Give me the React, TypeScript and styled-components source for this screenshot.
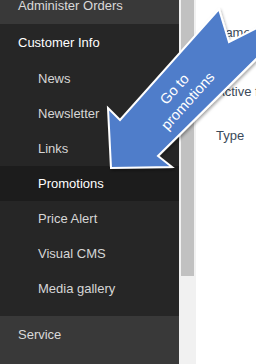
import React from 'react';
import styled, { createGlobalStyle } from 'styled-components';

const GlobalStyle = createGlobalStyle`
    html, body {
        margin: 0;
        padding: 0;
        background: #ffffff;
    }
    body {
        font-family: "Liberation Sans", Arial, sans-serif;
    }
`;

const Page = styled.div`
    position: relative;
    display: flex;
    width: 256px;
    height: 364px;
    overflow: hidden;
`;

const Sidebar = styled.nav`
    width: 179px;
    flex-shrink: 0;
    display: flex;
    flex-direction: column;
    background: #393939;
    font-size: 13px;
`;

const Category = styled.div<{ $open?: boolean }>`
    display: flex;
    flex-direction: column;
    background: ${props => (props.$open ? '#262626' : '#393939')};
    padding-bottom: ${props => (props.$open ? '10px' : '0')};
    &:first-child {
        margin-top: -13px;
    }
`;

const CategoryTitle = styled.div<{ $open?: boolean }>`
    height: 37px;
    display: flex;
    align-items: center;
    padding-left: 18px;
    color: ${props => (props.$open ? '#ffffff' : '#dadada')};
`;

const SubItem = styled.div<{ $active?: boolean }>`
    height: 35px;
    display: flex;
    align-items: center;
    padding-left: 38px;
    background: ${props => (props.$active ? '#1c1c1c' : 'transparent')};
    color: ${props => (props.$active ? '#ffffff' : '#d6d6d6')};
`;

const ScrollTrack = styled.div`
    width: 17px;
    flex-shrink: 0;
    background: #f1f1f1;
    display: flex;
    justify-content: center;
`;

const ScrollThumb = styled.div`
    width: 13px;
    height: 276px;
    background: #c1c1c1;
`;

const Content = styled.main`
    flex: 1;
    background: #ffffff;
    padding: 24px 0 0 20px;
    font-size: 13px;
    color: #3b4a5a;
`;

const FieldRow = styled.div<{ $height: number }>`
    height: ${props => props.$height}px;
    line-height: 18px;
    white-space: nowrap;
`;

const Callout = styled.svg`
    position: absolute;
    left: 0;
    top: 0;
    width: 256px;
    height: 364px;
    pointer-events: none;
    overflow: hidden;
`;

const subItems = ['News', 'Newsletter', 'Links', 'Promotions', 'Price Alert', 'Visual CMS', 'Media gallery'];

export default function App() {
    return (
        <>
            <GlobalStyle />
            <Page>
                <Sidebar>
                    <Category>
                        <CategoryTitle>Administer Orders</CategoryTitle>
                    </Category>
                    <Category $open>
                        <CategoryTitle $open>Customer Info</CategoryTitle>
                        {subItems.map(item => (
                            <SubItem key={item} $active={item === 'Promotions'}>
                                {item}
                            </SubItem>
                        ))}
                    </Category>
                    <Category>
                        <CategoryTitle>Service</CategoryTitle>
                    </Category>
                </Sidebar>
                <ScrollTrack>
                    <ScrollThumb />
                </ScrollTrack>
                <Content>
                    <FieldRow $height={59}>Name</FieldRow>
                    <FieldRow $height={44}>Active from</FieldRow>
                    <FieldRow $height={44}>Type</FieldRow>
                </Content>

                {/* callout arrow pasted over the screenshot */}
                <Callout viewBox="0 0 256 364">
                    <defs>
                        <filter id="arrowShadow" x="-20%" y="-20%" width="140%" height="140%">
                            <feDropShadow dx="1" dy="2" stdDeviation="1.5" floodColor="#000" floodOpacity="0.35" />
                        </filter>
                    </defs>
                    <polygon
                        points="219,9 229,42 319,-3 158,156 172,167 111,168 108,108 120,120"
                        fill="#4f7dca"
                        stroke="#ffffff"
                        strokeWidth="2"
                        strokeLinejoin="miter"
                        filter="url(#arrowShadow)"
                    />
                    <g transform="translate(181 95) rotate(-48)">
                        <text
                            textAnchor="middle"
                            fill="#ffffff"
                            fontFamily='"Liberation Sans", Arial, sans-serif'
                            fontSize="14.5"
                        >
                            <tspan x="0" y="-4">Go to</tspan>
                            <tspan x="0" y="14">promotions</tspan>
                        </text>
                    </g>
                </Callout>
            </Page>
        </>
    );
}
